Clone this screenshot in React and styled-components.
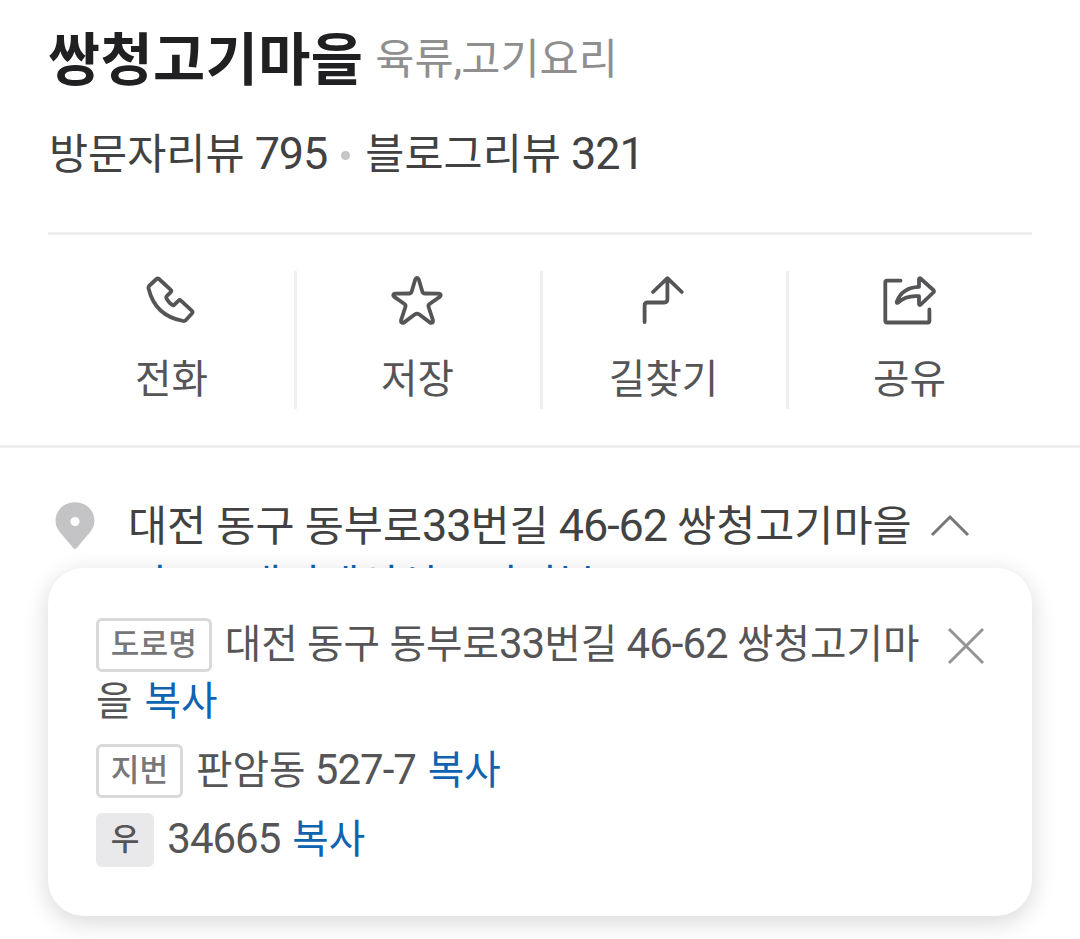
import styled, { createGlobalStyle } from "styled-components";

const actions = [
  { label: "전화", Icon: PhoneIcon },
  { label: "저장", Icon: StarIcon },
  { label: "길찾기", Icon: RouteIcon },
  { label: "공유", Icon: ShareIcon },
];

function App() {
  return (
    <Page>
      <GlobalStyle />
      <Header>
        <TitleRow>
          <Title>
            <Mixed>쌍청고기마을</Mixed>
          </Title>
          <Category>
            <Mixed>육류,고기요리</Mixed>
          </Category>
        </TitleRow>
        <Reviews>
          <Mixed>방문자리뷰 795</Mixed>
          <Dot />
          <Mixed>블로그리뷰 321</Mixed>
        </Reviews>
      </Header>

      <Actions>
        {actions.map(({ label, Icon }) => (
          <Action key={label}>
            <Icon />
            <Label>
              <Mixed>{label}</Mixed>
            </Label>
          </Action>
        ))}
      </Actions>

      <Location>
        <PinIcon />
        <div>
          <Address>
            <Mixed>대전 동구 동부로33번길 46-62 쌍청고기마을</Mixed>
            <ChevronIcon />
          </Address>
          <Links>
            <Mixed>지도</Mixed>
            <Mixed>내비게이션</Mixed>
            <Mixed>거리뷰</Mixed>
          </Links>
        </div>
        <Card>
          <Close aria-label="닫기">
            <CloseIcon />
          </Close>
          <Row>
            <Badge>
              <Mixed>도로명</Mixed>
            </Badge>
            <Mixed>대전 동구 동부로33번길 46-62 쌍청고기마을</Mixed>
            <Copy>
              <Mixed>복사</Mixed>
            </Copy>
          </Row>
          <Row>
            <Badge>
              <Mixed>지번</Mixed>
            </Badge>
            <Mixed>판암동 527-7</Mixed>
            <Copy>
              <Mixed>복사</Mixed>
            </Copy>
          </Row>
          <Row>
            <Badge $filled>
              <Mixed>우</Mixed>
            </Badge>
            <Mixed>34665</Mixed>
            <Copy>
              <Mixed>복사</Mixed>
            </Copy>
          </Row>
        </Card>
      </Location>
    </Page>
  );
}

// Hangul is set slightly smaller than the Roboto digits next to it
function Mixed({ children }) {
  return (
    <span>
      {children
        .split(/([가-힣]+)/)
        .filter(Boolean)
        .map((run, i) => (/[가-힣]/.test(run) ? <Ko key={i}>{run}</Ko> : run))}
    </span>
  );
}

function PhoneIcon() {
  return (
    <ActionSvg viewBox="0 0 60 54">
      <path d="M8 13 15.500 6Q16.800 4.900 18 6L29.800 16.800Q31 17.900 29.800 19.100L26 22.900Q24.800 24.200 25.600 25.700Q28 29.700 31.200 32Q32.400 32.800 33.400 31.700L37.600 27.600Q38.700 26.500 39.900 27.600L51 37.900Q52.200 39 51.100 40.200L44.700 47.200Q43.700 48.300 42.200 48Q14 43 7.500 15.300Q7.100 14 8 13Z" />
    </ActionSvg>
  );
}

function StarIcon() {
  return (
    <ActionSvg viewBox="0 0 60 54">
      <path d="M28.300 6.300Q30 3.700 31.700 6.300L35.300 18.500Q35.900 20.500 38 20.500L51.800 20.600Q55 21.300 53 23.600L42.500 31Q41 32.200 41.600 34L46 47.300Q46.200 50.600 43.200 49.600L32 41.300Q30 40 28 41.300L16.800 49.600Q13.800 50.600 14 47.300L18.400 34Q19 32.200 17.500 31L7 23.600Q5 21.300 8.200 20.600L22 20.500Q24.100 20.500 24.700 18.500Z" />
    </ActionSvg>
  );
}

function RouteIcon() {
  return (
    <ActionSvg viewBox="0 0 60 54">
      <path d="M11.600 49V32.700Q11.600 29.500 14.800 29.500H31.200Q34.400 29.500 34.400 26.300V5.500M20 19 34.400 5.200 48.800 19" />
    </ActionSvg>
  );
}

function ShareIcon() {
  return (
    <ActionSvg viewBox="0 0 60 54">
      <path d="M21.500 7.700H8Q6.300 7.700 6.300 9.400V47.800Q6.300 49.500 8 49.500H48.700Q50.400 49.500 50.400 47.800V36.500" />
      <path d="M40 6.300Q40.300 4.500 41.800 5.800L54.300 17Q55.700 18.300 54.300 19.500L41.800 31.500Q40.300 32.700 40 31V23.200Q27 22 19 29.600Q17.300 30.500 17.800 28.600Q23 14.500 40 13.800Z" />
    </ActionSvg>
  );
}

function PinIcon() {
  return (
    <PinSvg viewBox="0 0 40 48">
      <path
        fillRule="evenodd"
        d="M20 .2C9 .2.500 8.300.500 18.600c0 4.700 1.900 9 4.900 12.200L18.500 46.300q1.500 1.600 3 0L34.600 30.800c3-3.200 4.900-7.500 4.900-12.200C39.500 8.300 31 .2 20 .2ZM20 15a4.600 4.600 0 1 1 0 9.200 4.600 4.600 0 0 1 0-9.200Z"
      />
    </PinSvg>
  );
}

function ChevronIcon() {
  return (
    <ChevronSvg viewBox="0 0 40 24">
      <path d="M2 21 20 3 38 21" />
    </ChevronSvg>
  );
}

function CloseIcon() {
  return (
    <CloseSvg viewBox="0 0 38 38">
      <path d="M2 2 36 36M36 2 2 36" />
    </CloseSvg>
  );
}

const GlobalStyle = createGlobalStyle`
  * {
    box-sizing: border-box;
  }

  body {
    margin: 0;
    background: #fff;
    font-family: Roboto, "Noto Sans CJK KR", sans-serif;
  }

  span {
    letter-spacing: -0.024em;
  }
`;

const Page = styled.main`
  width: 1080px;
  height: 939px;
  overflow: hidden;
`;

const Ko = styled.span`
  font-family: "Noto Sans CJK KR", sans-serif;
  font-size: 0.945em;
  line-height: 1;
  letter-spacing: 0;
`;

const Header = styled.header`
  height: 235px;
  margin: 0 48px;
  padding: 24px 0 0 1px;
  border-bottom: 3px solid #efefef;
`;

const TitleRow = styled.div`
  display: flex;
  gap: 12px;
  height: 72px;
`;

const Title = styled.h1`
  margin: 0 0 0 -1px;
  color: #202022;
  font-size: 60px;
  font-weight: 700;
  line-height: 72px;

  ${Ko} {
    letter-spacing: 0.4px;
  }
`;

const Category = styled.span`
  color: #8f8f8f;
  font-size: 45px;
  line-height: 70px;
`;

const Reviews = styled.div`
  display: flex;
  align-items: center;
  height: 60px;
  margin-top: 28px;
  color: #424242;
  font-size: 45px;
  line-height: 60px;
`;

const Dot = styled.i`
  width: 9px;
  height: 9px;
  margin: 3px 15px 0 14px;
  border-radius: 50%;
  background: #c5c5c7;
`;

const Actions = styled.nav`
  display: grid;
  grid-template-columns: repeat(4, 1fr);
  height: 213px;
  padding: 36px 48px;
  border-bottom: 3px solid #efefef;
`;

const Action = styled.div`
  display: flex;
  flex-direction: column;
  align-items: center;
  gap: 25px;
  padding-top: 2px;

  & + & {
    box-shadow: inset 3px 0 0 #efefef;
  }
`;

const Label = styled.div`
  padding-left: 1px;
  color: #555557;
  font-size: 42px;
  line-height: 54px;
`;

const ActionSvg = styled.svg`
  width: 60px;
  height: 54px;
  fill: none;
  stroke: #555557;
  stroke-width: 3.8;
  stroke-linecap: round;
  stroke-linejoin: round;
`;

const Location = styled.section`
  position: relative;
  display: flex;
  gap: 33px;
  padding: 54px 48px 0 55px;
`;

const PinSvg = styled.svg`
  flex: none;
  width: 40px;
  height: 48px;
  fill: #c4c4c6;
`;

const Address = styled.div`
  display: flex;
  align-items: center;
  gap: 18px;
  height: 60px;
  margin-top: -6px;
  color: #424242;
  font-size: 45px;
  line-height: 60px;
  white-space: nowrap;
`;

const ChevronSvg = styled.svg`
  width: 40px;
  height: 24px;
  fill: none;
  stroke: #777;
  stroke-width: 3;
`;

const Links = styled.div`
  display: flex;
  gap: 36px;
  color: #0f63b0;
  font-size: 45px;
  line-height: 58px;

  & > :last-child {
    margin-left: 5px;
  }
`;

const Card = styled.div`
  position: absolute;
  top: 120px;
  left: 48px;
  display: flex;
  flex-direction: column;
  gap: 12px;
  width: 984px;
  height: 348px;
  padding: 47px 48px;
  border-radius: 36px;
  background: #fff;
  box-shadow: 0 6px 24px rgba(0, 0, 0, 0.16);
`;

const Row = styled.div`
  max-width: 834px;
  color: #555557;
  font-size: 42px;
  line-height: 57px;
  word-break: break-all;
`;

const Badge = styled.span`
  display: inline-block;
  height: 54px;
  margin: 3px 13px 0 0;
  padding: 0 11.800px;
  border: 3px solid ${(props) => (props.$filled ? "#e9e9eb" : "#d9d9db")};
  border-radius: 6px;
  background: ${(props) => (props.$filled ? "#e9e9eb" : "#fff")};
  color: ${(props) => (props.$filled ? "#555557" : "#777779")};
  font-size: 33px;
  font-weight: 500;
  line-height: 45px;
  vertical-align: top;
`;

const Copy = styled.a`
  margin-left: 12px;
  color: #0f63b0;
`;

const Close = styled.button`
  position: absolute;
  top: 59px;
  right: 47px;
  display: flex;
  padding: 0;
  border: 0;
  background: none;
`;

const CloseSvg = styled.svg`
  width: 38px;
  height: 38px;
  fill: none;
  stroke: #959597;
  stroke-width: 3;
`;

export default App;
